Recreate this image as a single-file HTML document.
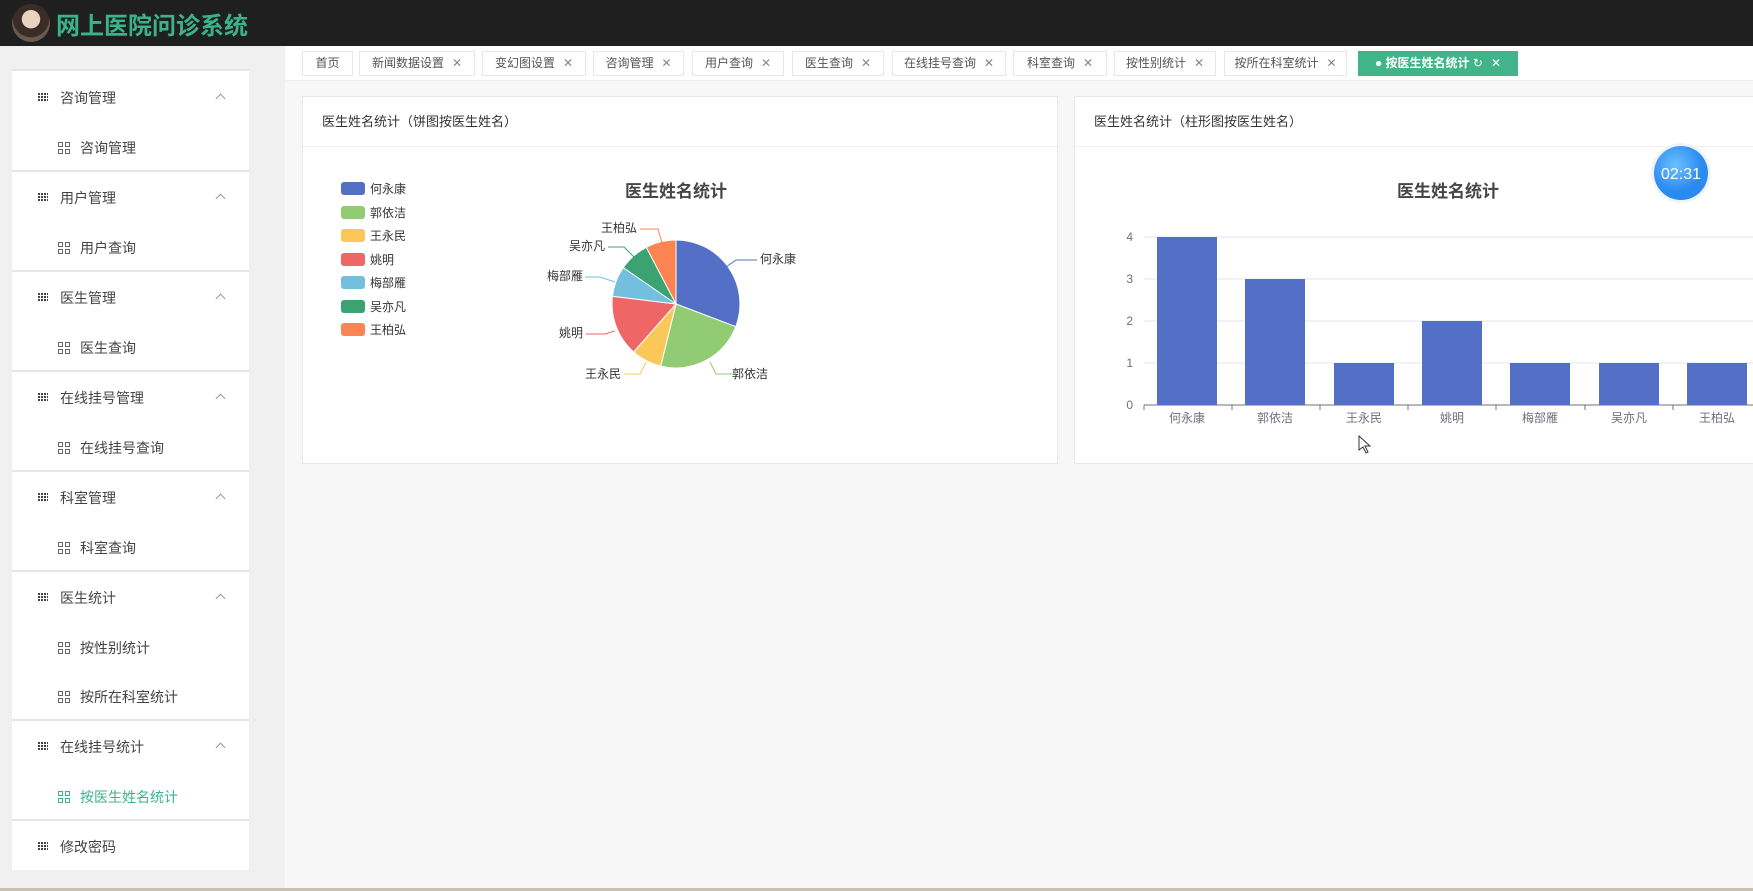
<!DOCTYPE html>
<html><head><meta charset="utf-8"><style>
*{margin:0;padding:0;box-sizing:border-box}
body{width:1753px;height:891px;overflow:hidden;background:#f7f7f7;font-family:"Liberation Sans","Noto Sans CJK SC",sans-serif;position:relative;color:#333}
.hdr{position:absolute;left:0;top:0;width:1753px;height:46px;background:#1f1f1f}
.logo{position:absolute;left:12px;top:4px;width:38px;height:38px;border-radius:50%;background:radial-gradient(circle at 50% 40%,#e8d2c0 0 30%,#3a2c26 32% 60%,#6a5a50 62%)}
.title{position:absolute;left:56px;top:6px;font-size:24px;font-weight:bold;color:#3bb38a}
.side{position:absolute;left:0;top:46px;width:285px;height:845px;background:#f0f0f0}
.menu{position:absolute;left:12px;top:69px;width:237px;height:801px;background:#fff;border-top:2px solid #e6e6e6}
.it{position:absolute;left:0;width:237px;height:50px;font-size:14px;color:#444;line-height:54px}
.grp{padding-left:48px}
.sub{padding-left:68px}
.ic1{position:absolute;left:26px;top:21px;width:10px;height:9px;background:repeating-linear-gradient(90deg,#444 0 2px,transparent 2px 3px),#fff}
.ic1:after{content:"";position:absolute;inset:0;background:repeating-linear-gradient(0deg,transparent 0 2px,#fff 2px 3px)}
.ic2{position:absolute;left:46px;top:21px;width:12px;height:12px}
.ic2 i{position:absolute;width:5px;height:5px;border:1px solid #666}
.chev{position:absolute;left:205px;top:24px;width:7px;height:7px;border-left:1px solid #999;border-top:1px solid #999;transform:rotate(45deg)}
.sep{position:absolute;left:0;width:237px;height:2px;background:#e6e6e6}
.act{color:#3bb38a}
.act .ic2 i{border-color:#3bb38a}
.tabbar{position:absolute;left:286px;top:46px;width:1467px;height:35px;background:#fff;border-bottom:1px solid #eee}
.tab{position:absolute;top:5px;height:25px;border:1px solid #e8e8e8;background:#fff;font-size:12px;color:#555;line-height:23px;text-align:center}
.tab b{font-weight:normal;color:#888;margin-left:8px}
.card{position:absolute;top:96px;height:368px;background:#fff;border:1px solid #e8e8e8}
.ch{height:50px;border-bottom:1px solid #eee;font-size:13px;line-height:50px;padding-left:19px;color:#333}
svg text{font-family:"Liberation Sans","Noto Sans CJK SC",sans-serif}
</style></head><body>
<div class="hdr"><div class="logo"></div><div class="title">网上医院问诊系统</div></div>
<div class="side"></div>
<div class="menu">
 <div class="it grp" style="top:0"><span class="ic1"></span>咨询管理<span class="chev"></span></div>
 <div class="it sub" style="top:50px"><span class="ic2"><i style="left:0;top:0"></i><i style="left:7px;top:0"></i><i style="left:0;top:7px"></i><i style="left:7px;top:7px"></i></span>咨询管理</div>
 <div class="sep" style="top:99px"></div>
 <div class="it grp" style="top:100px"><span class="ic1"></span>用户管理<span class="chev"></span></div>
 <div class="it sub" style="top:150px"><span class="ic2"><i style="left:0;top:0"></i><i style="left:7px;top:0"></i><i style="left:0;top:7px"></i><i style="left:7px;top:7px"></i></span>用户查询</div>
 <div class="sep" style="top:199px"></div>
 <div class="it grp" style="top:200px"><span class="ic1"></span>医生管理<span class="chev"></span></div>
 <div class="it sub" style="top:250px"><span class="ic2"><i style="left:0;top:0"></i><i style="left:7px;top:0"></i><i style="left:0;top:7px"></i><i style="left:7px;top:7px"></i></span>医生查询</div>
 <div class="sep" style="top:299px"></div>
 <div class="it grp" style="top:300px"><span class="ic1"></span>在线挂号管理<span class="chev"></span></div>
 <div class="it sub" style="top:350px"><span class="ic2"><i style="left:0;top:0"></i><i style="left:7px;top:0"></i><i style="left:0;top:7px"></i><i style="left:7px;top:7px"></i></span>在线挂号查询</div>
 <div class="sep" style="top:399px"></div>
 <div class="it grp" style="top:400px"><span class="ic1"></span>科室管理<span class="chev"></span></div>
 <div class="it sub" style="top:450px"><span class="ic2"><i style="left:0;top:0"></i><i style="left:7px;top:0"></i><i style="left:0;top:7px"></i><i style="left:7px;top:7px"></i></span>科室查询</div>
 <div class="sep" style="top:499px"></div>
 <div class="it grp" style="top:500px"><span class="ic1"></span>医生统计<span class="chev"></span></div>
 <div class="it sub" style="top:550px"><span class="ic2"><i style="left:0;top:0"></i><i style="left:7px;top:0"></i><i style="left:0;top:7px"></i><i style="left:7px;top:7px"></i></span>按性别统计</div>
 <div class="it sub" style="top:599px"><span class="ic2"><i style="left:0;top:0"></i><i style="left:7px;top:0"></i><i style="left:0;top:7px"></i><i style="left:7px;top:7px"></i></span>按所在科室统计</div>
 <div class="sep" style="top:648px"></div>
 <div class="it grp" style="top:649px"><span class="ic1"></span>在线挂号统计<span class="chev"></span></div>
 <div class="it sub act" style="top:699px"><span class="ic2"><i style="left:0;top:0"></i><i style="left:7px;top:0"></i><i style="left:0;top:7px"></i><i style="left:7px;top:7px"></i></span>按医生姓名统计</div>
 <div class="sep" style="top:748px"></div>
 <div class="it grp" style="top:749px"><span class="ic1"></span>修改密码</div>
</div>
<div class="tabbar"></div>
<div class="tab" style="left:302px;top:51px;width:51px">首页</div>
<div class="tab" style="left:359px;top:51px;width:116px">新闻数据设置<b>✕</b></div>
<div class="tab" style="left:482px;top:51px;width:104px">变幻图设置<b>✕</b></div>
<div class="tab" style="left:593px;top:51px;width:91px">咨询管理<b>✕</b></div>
<div class="tab" style="left:692px;top:51px;width:92px">用户查询<b>✕</b></div>
<div class="tab" style="left:792px;top:51px;width:92px">医生查询<b>✕</b></div>
<div class="tab" style="left:892px;top:51px;width:114px">在线挂号查询<b>✕</b></div>
<div class="tab" style="left:1013px;top:51px;width:94px">科室查询<b>✕</b></div>
<div class="tab" style="left:1114px;top:51px;width:102px">按性别统计<b>✕</b></div>
<div class="tab" style="left:1224px;top:51px;width:123px">按所在科室统计<b>✕</b></div>
<div class="tab" style="left:1358px;top:51px;width:160px;background:#41b48b;border-color:#41b48b;color:#fff;font-weight:bold">● 按医生姓名统计 <span style="font-weight:normal">↻</span><b style="color:#fff">✕</b></div>

<div class="card" style="left:302px;width:756px"><div class="ch">医生姓名统计（饼图按医生姓名）</div></div>
<div class="card" style="left:1074px;width:690px"><div class="ch">医生姓名统计（柱形图按医生姓名）</div></div>

<svg width="1753" height="891" style="position:absolute;left:0;top:0">
 <g font-size="12" fill="#333">
  <rect x="341" y="182" width="24" height="13" rx="3" fill="#5470c6"/><text x="370" y="193">何永康</text>
  <rect x="341" y="206" width="24" height="13" rx="3" fill="#91cc75"/><text x="370" y="217">郭依洁</text>
  <rect x="341" y="229" width="24" height="13" rx="3" fill="#fac858"/><text x="370" y="240">王永民</text>
  <rect x="341" y="253" width="24" height="13" rx="3" fill="#ee6666"/><text x="370" y="264">姚明</text>
  <rect x="341" y="276" width="24" height="13" rx="3" fill="#73c0de"/><text x="370" y="287">梅部雁</text>
  <rect x="341" y="300" width="24" height="13" rx="3" fill="#3ba272"/><text x="370" y="311">吴亦凡</text>
  <rect x="341" y="323" width="24" height="13" rx="3" fill="#fc8452"/><text x="370" y="334">王柏弘</text>
 </g>
 <text x="676" y="197" font-size="17" font-weight="bold" fill="#464646" text-anchor="middle">医生姓名统计</text>
 <g stroke="#fff" stroke-width="1">
  <path d="M676 304L676 240A64 64 0 0 1 735.8 326.7Z" fill="#5470c6"/>
  <path d="M676 304L735.8 326.7A64 64 0 0 1 660.7 366.1Z" fill="#91cc75"/>
  <path d="M676 304L660.7 366.1A64 64 0 0 1 633.6 351.9Z" fill="#fac858"/>
  <path d="M676 304L633.6 351.9A64 64 0 0 1 612.5 296.3Z" fill="#ee6666"/>
  <path d="M676 304L612.5 296.3A64 64 0 0 1 623.3 267.6Z" fill="#73c0de"/>
  <path d="M676 304L623.3 267.6A64 64 0 0 1 646.3 247.3Z" fill="#3ba272"/>
  <path d="M676 304L646.3 247.3A64 64 0 0 1 676 240Z" fill="#fc8452"/>
 </g>
 <g fill="none" stroke-width="1">
  <path d="M726 267L736 260L757 260" stroke="#5470c6"/>
  <path d="M710 362L716 374L736 374" stroke="#91cc75"/>
  <path d="M646 362L640 374L624 374" stroke="#fac858"/>
  <path d="M615 331L605 334L586 334" stroke="#ee6666"/>
  <path d="M615 282L600 277L585 277" stroke="#73c0de"/>
  <path d="M634 257L624 247L608 247" stroke="#3ba272"/>
  <path d="M662 243L658 229L640 229" stroke="#fc8452"/>
 </g>
 <g font-size="12" fill="#333">
  <text x="760" y="263">何永康</text><text x="732" y="378">郭依洁</text>
  <text x="621" y="378" text-anchor="end">王永民</text><text x="583" y="337" text-anchor="end">姚明</text>
  <text x="583" y="280" text-anchor="end">梅部雁</text><text x="605" y="250" text-anchor="end">吴亦凡</text>
  <text x="637" y="232" text-anchor="end">王柏弘</text>
 </g>
 <text x="1448" y="197" font-size="17" font-weight="bold" fill="#464646" text-anchor="middle">医生姓名统计</text>
 <g stroke="#e0e6f1"><path d="M1144 237H1753M1144 279H1753M1144 321H1753M1144 363H1753"/></g>
 <path d="M1144 405H1753" stroke="#6e7079"/>
 <g font-size="12" fill="#6e7079" text-anchor="end"><text x="1133" y="241">4</text><text x="1133" y="283">3</text><text x="1133" y="325">2</text><text x="1133" y="367">1</text><text x="1133" y="409">0</text></g>
 <g fill="#5470c6">
  <rect x="1157" y="237" width="60" height="168"/><rect x="1245" y="279" width="60" height="126"/>
  <rect x="1334" y="363" width="60" height="42"/><rect x="1422" y="321" width="60" height="84"/>
  <rect x="1510" y="363" width="60" height="42"/><rect x="1599" y="363" width="60" height="42"/>
  <rect x="1687" y="363" width="60" height="42"/>
 </g>
 <g stroke="#6e7079"><path d="M1144 405v5M1232 405v5M1320 405v5M1408 405v5M1496 405v5M1585 405v5M1673 405v5"/></g>
 <g font-size="12" fill="#6e7079" text-anchor="middle">
  <text x="1187" y="422">何永康</text><text x="1275" y="422">郭依洁</text><text x="1364" y="422">王永民</text>
  <text x="1452" y="422">姚明</text><text x="1540" y="422">梅部雁</text><text x="1629" y="422">吴亦凡</text><text x="1717" y="422">王柏弘</text>
 </g>
 <defs><radialGradient id="tg" cx="40%" cy="35%"><stop offset="0" stop-color="#6cc0ff"/><stop offset="1" stop-color="#2b8af0"/></radialGradient></defs>
 <circle cx="1681" cy="173" r="30" fill="#eef4fa"/>
 <circle cx="1681" cy="173" r="27" fill="url(#tg)"/>
 <text x="1681" y="179" font-size="16" fill="#fff" text-anchor="middle">02:31</text>
 <path d="M1359 436v14l4-3 3 6 2-1-3-6h5z" fill="#fff" stroke="#333"/>
 <rect x="0" y="888" width="1753" height="3" fill="#c8c0b0"/>
</svg>
</body></html>
